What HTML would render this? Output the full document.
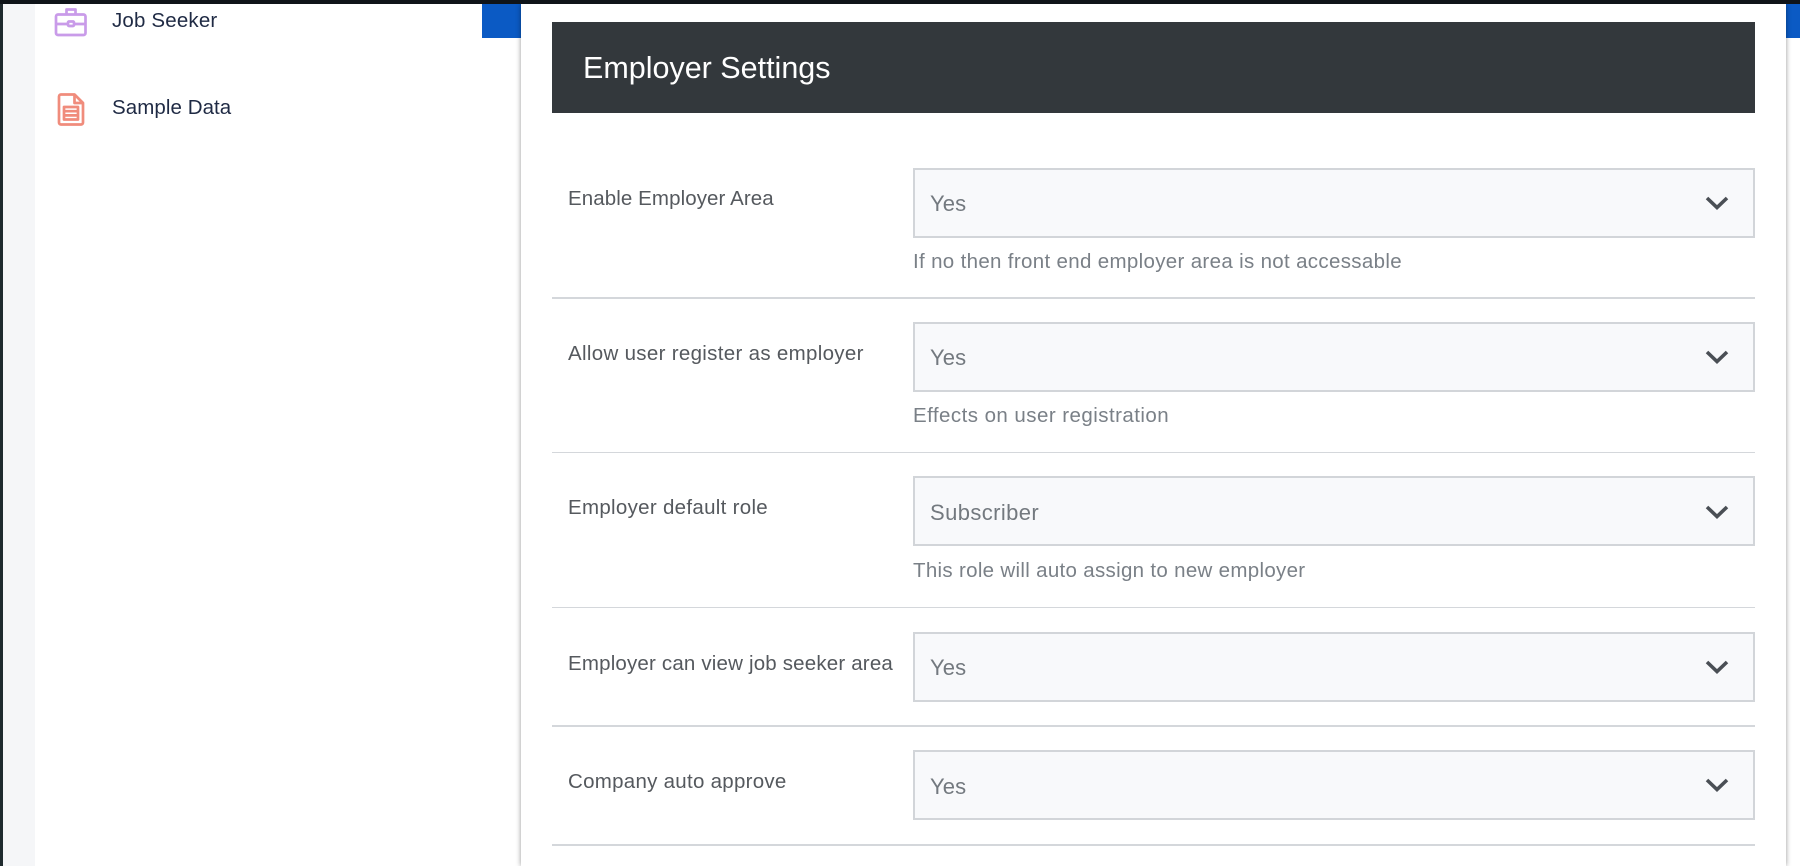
<!DOCTYPE html>
<html lang="en">
<head>
<meta charset="utf-8">
<title>Employer Settings</title>
<style>
html,body{margin:0;padding:0;background:#fff;}
body{position:relative;width:1800px;height:866px;overflow:hidden;font-family:"Liberation Sans",Arial,sans-serif;}
.abs{position:absolute;}
.t{position:absolute;white-space:nowrap;line-height:24px;font-size:20.5px;}
.nav{color:#1f2a44;}
.lbl{color:#55595e;left:568px;}
.help{color:#7a8087;left:913px;letter-spacing:.33px;}
.sel{position:absolute;left:913px;width:838px;height:66px;border:2px solid #d2d5d9;background:#f8f9fb;}
.val{position:absolute;left:15px;top:22px;line-height:24px;font-size:22px;letter-spacing:.1px;color:#73797f;}
.sel svg{position:absolute;left:790px;top:25.500px;}
.hr{position:absolute;left:552px;width:1203px;background:#d4d7db;}
</style>
</head>
<body>
<div class="abs" style="left:0;top:0;width:3px;height:866px;background:#1f2a2e;"></div>
<div class="abs" style="left:3px;top:0;width:32px;height:866px;background:#f5f6f8;"></div>
<div class="abs" style="left:482px;top:4px;width:39px;height:34px;background:#0b5ac4;"></div>
<div class="abs" style="left:1786px;top:4px;width:14px;height:34px;background:#0b5ac4;"></div>
<div class="abs" style="left:521px;top:4px;width:1265px;height:862px;background:#fff;box-shadow:0 0 5px rgba(0,0,0,.42);"></div>
<div class="abs" style="left:0;top:0;width:1800px;height:4px;background:#0f1419;"></div>

<svg class="abs" style="left:54px;top:6px;" width="34" height="31" viewBox="0 0 34 31" fill="none" stroke="#c99be9" stroke-width="2.700" stroke-linejoin="round">
<path d="M12.500 8V3.500h9V8"/>
<rect x="2" y="8.500" width="29.500" height="20.500" rx="2"/>
<path d="M2 18h11.500M20.500 18H31.500"/>
<rect x="14" y="15.500" width="6" height="4.500" rx="1"/>
</svg>
<div class="t nav" style="left:112px;top:9px;letter-spacing:.17px;">Job Seeker</div>

<svg class="abs" style="left:57px;top:92px;" width="28" height="35" viewBox="0 0 28 35" fill="none" stroke="#f08c7c" stroke-width="2.700" stroke-linejoin="round">
<path d="M4 2.500h13.500L26 11v19.500a2 2 0 0 1-2 2H4a2 2 0 0 1-2-2v-26a2 2 0 0 1 2-2z"/>
<path d="M17.500 2.500V11H26"/>
<rect x="7" y="15" width="14" height="12.500"/>
<path d="M7 19.200h14M7 23.400h14"/>
</svg>
<div class="t nav" style="left:112px;top:96px;letter-spacing:.07px;">Sample Data</div>

<div class="abs" style="left:552px;top:22px;width:1203px;height:91px;background:#33383c;"></div>
<div class="t" style="left:583px;top:51px;font-size:30.500px;line-height:34px;color:#fff;">Employer Settings</div>

<div class="t lbl" style="top:187px;letter-spacing:.09px;">Enable Employer Area</div>
<div class="sel" style="top:168px;"><span class="val">Yes</span><svg width="24" height="14" viewBox="0 0 24 14" fill="none" stroke="#4a4f55" stroke-width="3.600"><path d="M2 2l10 9.500L22 2"/></svg></div>
<div class="t help" style="top:250px;">If no then front end employer area is not accessable</div>
<div class="hr" style="top:297px;height:2px;"></div>

<div class="t lbl" style="top:342px;letter-spacing:.315px;">Allow user register as employer</div>
<div class="sel" style="top:322px;"><span class="val">Yes</span><svg width="24" height="14" viewBox="0 0 24 14" fill="none" stroke="#4a4f55" stroke-width="3.600"><path d="M2 2l10 9.500L22 2"/></svg></div>
<div class="t help" style="top:404px;letter-spacing:.45px;">Effects on user registration</div>
<div class="hr" style="top:452px;height:1px;"></div>

<div class="t lbl" style="top:496px;letter-spacing:.3px;">Employer default role</div>
<div class="sel" style="top:476px;"><span class="val" style="top:23px;letter-spacing:.4px;">Subscriber</span><svg style="top:27px;" width="24" height="14" viewBox="0 0 24 14" fill="none" stroke="#4a4f55" stroke-width="3.600"><path d="M2 2l10 9.500L22 2"/></svg></div>
<div class="t help" style="top:559px;letter-spacing:.31px;">This role will auto assign to new employer</div>
<div class="hr" style="top:607px;height:1px;"></div>

<div class="t lbl" style="top:652px;letter-spacing:.18px;">Employer can view job seeker area</div>
<div class="sel" style="top:632px;"><span class="val">Yes</span><svg width="24" height="14" viewBox="0 0 24 14" fill="none" stroke="#4a4f55" stroke-width="3.600"><path d="M2 2l10 9.500L22 2"/></svg></div>
<div class="hr" style="top:725px;height:2px;"></div>

<div class="t lbl" style="top:770px;letter-spacing:.275px;">Company auto approve</div>
<div class="sel" style="top:750px;"><span class="val" style="top:23px;">Yes</span><svg style="top:26px;" width="24" height="14" viewBox="0 0 24 14" fill="none" stroke="#4a4f55" stroke-width="3.600"><path d="M2 2l10 9.500L22 2"/></svg></div>
<div class="hr" style="top:844px;height:2px;"></div>
</body>
</html>
